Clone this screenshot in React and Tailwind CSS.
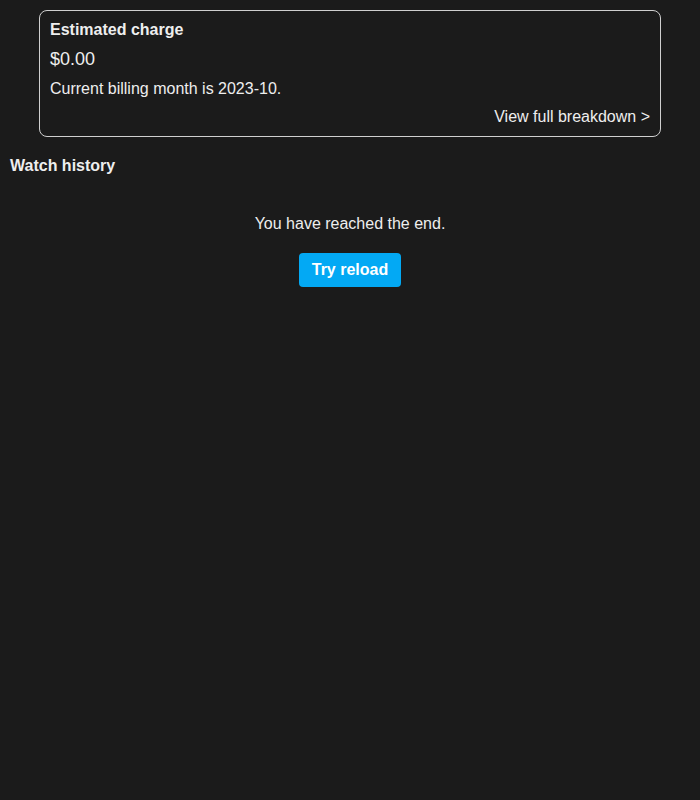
export default function App() {
  return (
    <div className="min-h-[800px] bg-[#1b1b1b] text-[#eeeeee] font-['Liberation_Sans',Arial,sans-serif] pt-[10px]">
      {/* Estimated charge card */}
      <div className="mx-[39px] border border-[#cfcfcf] rounded-[8px] px-[10px] pt-[9px] pb-[9px]">
        <div className="text-[16px] leading-[20px] font-bold">Estimated charge</div>
        <div className="mt-[8px] text-[18px] leading-[22px]">$0.00</div>
        <div className="mt-[9px] text-[16px] leading-[20px]">Current billing month is 2023-10.</div>
        <div className="mt-[8px] text-[16px] leading-[20px] text-right">View full breakdown &gt;</div>
      </div>

      {/* Watch history */}
      <div className="px-[10px] mt-[19px] text-[16px] leading-[20px] font-bold">Watch history</div>

      <div className="flex flex-col items-center mt-[38px]">
        <p className="text-[16px] leading-[20px]">You have reached the end.</p>
        <button className="mt-[19px] h-[34px] px-[13px] rounded-[4px] bg-[#03a9f4] text-white text-[16px] font-bold">
          Try reload
        </button>
      </div>
    </div>
  )
}
